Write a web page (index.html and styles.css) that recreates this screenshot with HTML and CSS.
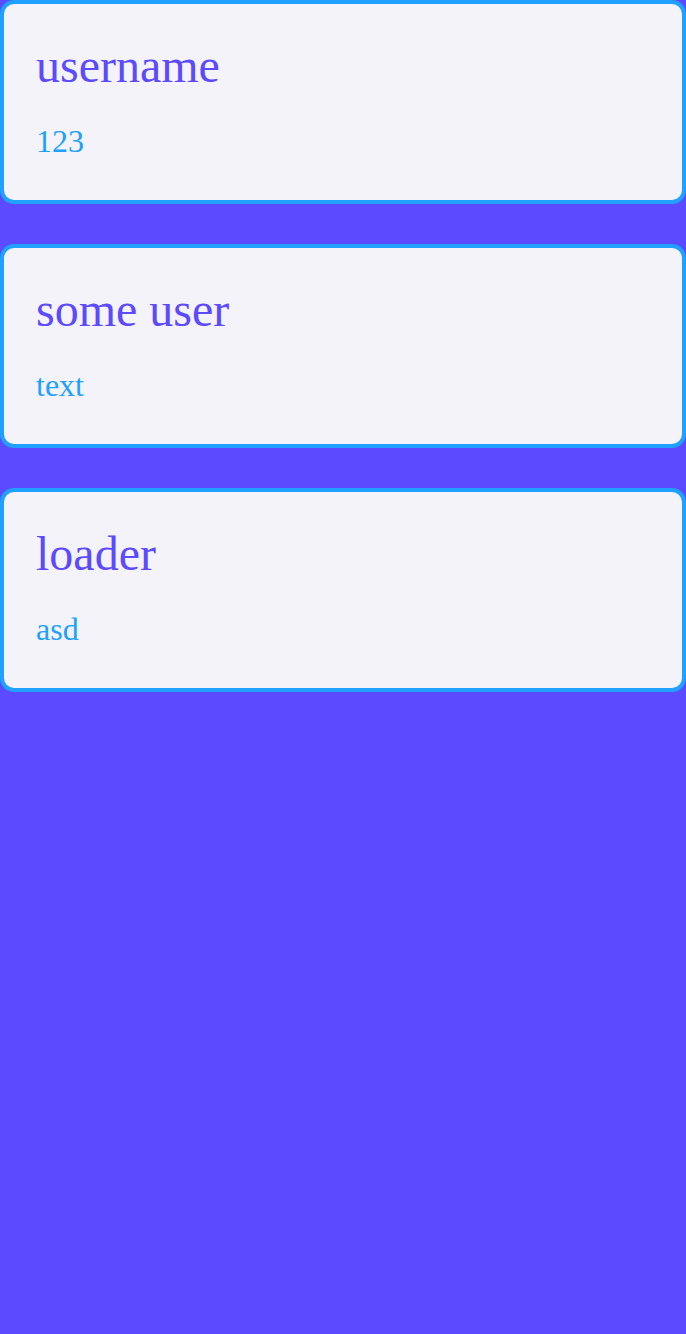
FILE: index.html
```html
<!DOCTYPE html>
<html>
<head>
<meta charset="utf-8">
<link rel="stylesheet" href="styles.css">
</head>
<body>
<div class="list">
  <div class="card">
    <div class="title">username</div>
    <div class="sub">123</div>
  </div>
  <div class="card">
    <div class="title">some user</div>
    <div class="sub">text</div>
  </div>
  <div class="card">
    <div class="title">loader</div>
    <div class="sub">asd</div>
  </div>
</div>
</body>
</html>
```
FILE: styles.css
```css
html, body {
  margin: 0;
  padding: 0;
  background: #5c4aff;
  min-height: 100%;
}
body {
  font-family: "Liberation Serif", "Times New Roman", serif;
  height: 1334px;
}
.list {
  display: flex;
  flex-direction: column;
  gap: 40px;
}
.card {
  box-sizing: border-box;
  height: 204px;
  background: #f4f3fa;
  border: 4px solid #20a0ff;
  border-radius: 14px;
  padding: 34px 32px 0;
  display: flex;
  flex-direction: column;
}
.title {
  font-size: 48px;
  line-height: 55px;
  color: #5c4aff;
}
.sub {
  margin-top: 30px;
  font-size: 32px;
  line-height: 37px;
  color: #20a0ff;
}
```
